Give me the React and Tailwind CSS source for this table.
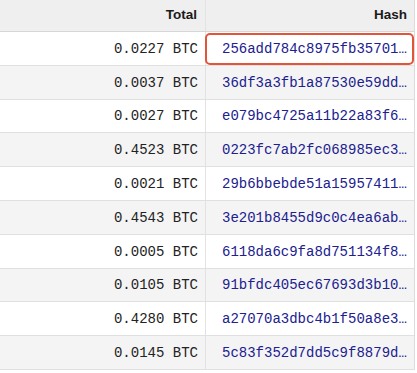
import React from 'react';

const rows = [
  { total: '0.0227', hash: '256add784c8975fb35701…' },
  { total: '0.0037', hash: '36df3a3fb1a87530e59dd…' },
  { total: '0.0027', hash: 'e079bc4725a11b22a83f6…' },
  { total: '0.4523', hash: '0223fc7ab2fc068985ec3…' },
  { total: '0.0021', hash: '29b6bbebde51a15957411…' },
  { total: '0.4543', hash: '3e201b8455d9c0c4ea6ab…' },
  { total: '0.0005', hash: '6118da6c9fa8d751134f8…' },
  { total: '0.0105', hash: '91bfdc405ec67693d3b10…' },
  { total: '0.4280', hash: 'a27070a3dbc4b1f50a8e3…' },
  { total: '0.0145', hash: '5c83f352d7dd5c9f8879d…' },
];

export default function App() {
  return (
    <div className="w-[417px] h-[373px] overflow-hidden bg-white">
      <div className="w-[415px] border-r border-[#dcdcdc]">
        {/* header */}
        <div className="flex h-[32px] bg-[#efefef] border-b border-[#d6d6d6] font-['Liberation_Sans',Arial,sans-serif] text-[13.5px] font-bold text-[#1a1a1a]">
          <div className="w-[206px] flex items-center justify-end pr-[8px] border-r border-[#e2e2e2]">Total</div>
          <div className="flex-1 flex items-center justify-end pr-[7px]">Hash</div>
        </div>

        {rows.map((row, i) => (
          <div
            key={row.hash}
            className={`flex h-[33.8px] border-b border-[#e0e0e0] font-['Liberation_Mono','Courier_New',monospace] text-[14px] ${i % 2 === 0 ? 'bg-white' : 'bg-[#f4f4f4]'}`}
          >
            <div className="w-[206px] flex items-center justify-end pt-[2px] pr-[7px] border-r border-[#e2e2e2] text-[#222]">
              {row.total} BTC
            </div>
            <div className="relative flex-1 min-w-0 flex items-center pt-[2px] pl-[16px] text-[#20208f] whitespace-nowrap">
              {row.hash}
              {i === 0 && (
                <div className="absolute left-[-1px] right-[0px] top-[1px] bottom-[0px] rounded-[5px] border-[2.5px] border-[#e2553a]" />
              )}
            </div>
          </div>
        ))}
      </div>
    </div>
  );
}
